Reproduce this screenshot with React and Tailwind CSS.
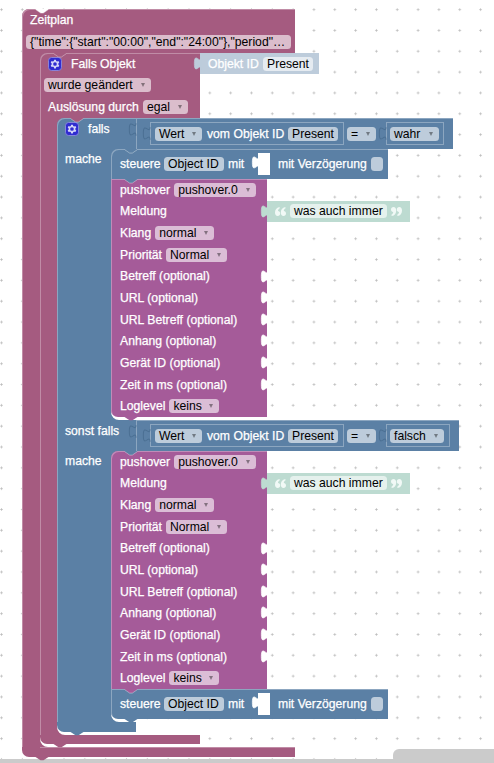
import React from "react";
import clsx from "clsx";

const optionalInputs = [
  "Betreff (optional)",
  "URL (optional)",
  "URL Betreff (optional)",
  "Anhang (optional)",
  "Gerät ID (optional)",
  "Zeit in ms (optional)",
];

// Notch on the upper edge of a block, filled with the colour of the block above
const Notch = ({ className }) => (
  <svg
    className={clsx("absolute top-0 left-[13px] z-10", className)}
    width="14"
    height="5"
    viewBox="0 0 14 5"
  >
    <path d="M.7 0v.5l5 3.4h2.6l5-3.4V0z" fill="currentColor" />
    <path d="M.7 .7l5 3.4h2.6l5-3.4" fill="none" stroke="#fff" strokeOpacity=".35" />
  </svg>
);

// Connector under the lower edge of a block
const Foot = ({ className }) => (
  <svg
    className={clsx("absolute top-full left-[13px] z-10", className)}
    width="14"
    height="4"
    viewBox="0 0 14 4"
  >
    <path d="M.5 0l5 3.3h3l5-3.3z" fill="currentColor" />
  </svg>
);

// Puzzle tab of a value block
const Tab = ({ className, outline }) => (
  <svg
    className={clsx("absolute overflow-visible", className)}
    width="7"
    height="17"
    viewBox="0 0 8.4 20.4"
  >
    <path
      d="M8.4 5c0 10-8-8-8 7.5s8-2.5 8 7.5z"
      fill="currentColor"
      stroke={outline ? "none" : "currentColor"}
      strokeWidth=".8"
    />
    {outline && (
      <path
        d="M8.4 5c0 10-8-8-8 7.5s8-2.5 8 7.5"
        fill="none"
        stroke="#4b6f93"
        strokeWidth="1.2"
      />
    )}
  </svg>
);

const Gear = () => (
  <svg className="shrink-0" width="14" height="14" viewBox="0 0 16 16">
    <rect x=".6" y=".6" width="14.8" height="14.8" rx="3.5" fill="#2f2bd0" stroke="#8f8de0" />
    <path
      d="M7 3h2l.4 1.5 1 .5 1.5-.5 1 1.7-1.1 1.1v1.4l1.1 1.1-1 1.7-1.5-.5-1 .5L9 13H7l-.4-1.5-1-.5-1.5.5-1-1.7 1.1-1.1V7.3L3.1 6.2l1-1.7 1.5.5 1-.5z"
      fill="#d4d5f8"
    />
    <circle cx="8" cy="8" r="2.1" fill="#2f2bd0" />
  </svg>
);

const Quote = ({ className }) => (
  <svg className={clsx("shrink-0", className)} width="11" height="9" viewBox="0 0 11 9" fill="#f1f9f6">
    <path d="M4.5 0C1.5.6 0 2.7 0 5.6 0 7.7 1 9 2.7 9 4.2 9 5.2 8 5.2 6.5 5.2 5.1 4.3 4.1 3 4c0-1.2.6-2.2 1.8-2.8z" />
    <path d="M10.3 0C7.3.6 5.8 2.7 5.8 5.6 5.8 7.7 6.8 9 8.5 9 10 9 11 8 11 6.5 11 5.1 10.1 4.1 8.8 4c0-1.2.6-2.2 1.8-2.8z" />
  </svg>
);

const Field = ({ children, className, dropdown }) => (
  <span
    className={clsx(
      "flex h-[14px] shrink-0 items-center rounded-[3.5px] bg-white/60 pl-[4px] text-black",
      className
    )}
  >
    {children}
    {dropdown && (
      <span className="ml-auto mr-[6px] h-0 w-0 border-x-[2.5px] border-t-4 border-x-transparent border-t-black/40" />
    )}
  </span>
);

const Label = ({ children, className }) => (
  <span className={clsx("shrink-0 [-webkit-text-stroke:0.25px]", className)}>{children}</span>
);

// Area of a C-shaped block that holds the nested blocks
const Statement = ({ children, label, className, arm, armText }) => (
  <div className="flex">
    <div className={clsx("shrink-0", arm, className)}>{label}</div>
    <div className={clsx("relative flex flex-col items-start pb-[3px]", armText)}>
      <span className="absolute top-0 left-0 h-[8px] w-[8px] bg-current" />
      <svg className="absolute bottom-0 left-0" width="8" height="8" viewBox="0 0 8 8">
        <path d="M0 0a8 8 0 0 0 8 8H0z" fill="currentColor" />
      </svg>
      {children}
    </div>
  </div>
);

const Comparison = ({ value, className, valueClass, fieldClass }) => (
  <div
    className={clsx(
      "relative flex h-[31px] items-center bg-[#5b80a5] pl-[14px] shadow-[inset_1px_1px_0_#8ca6c0]",
      className
    )}
  >
    <Tab className="-left-[7px] top-px text-[#5b80a5]" outline />
    <div className="relative flex h-[23px] w-[194px] shrink-0 items-center border border-[#8ca6c0] pl-[4px]">
      <Tab className="-left-[8px] top-0 text-[#5b80a5]" outline />
      <Field dropdown className="w-[47px]">Wert</Field>
      <Label className="ml-[5px] w-[81px]">vom Objekt ID</Label>
      <Field className="w-[50px]">Present</Field>
    </div>
    <Field dropdown className="ml-[3px] w-[29px]">=</Field>
    <div
      className={clsx(
        "relative ml-[10px] flex h-[23px] shrink-0 items-center border border-[#8ca6c0] pl-[3px]",
        valueClass
      )}
    >
      <Tab className="-left-[8px] top-0 text-[#5b80a5]" outline />
      <Field dropdown className={fieldClass}>{value}</Field>
    </div>
  </div>
);

const Control = ({ first, last }) => (
  <div
    className={clsx(
      "relative flex h-[30px] w-[277px] items-center bg-[#5b80a5] pl-[9px] shadow-[inset_1px_1px_0_#8ca6c0]",
      first && "rounded-tl-[7px]",
      last && "rounded-bl-[7px]"
    )}
  >
    <Notch className={first ? "text-[#5b80a5]" : "text-[#a55b99]"} />
    <Label className="w-[44px]">steuere</Label>
    <Field className="w-[60px]">Object ID</Field>
    <Label className="ml-[4px] w-[30px]">mit</Label>
    <div className="relative h-[22px] w-[12px] shrink-0 bg-white">
      <Tab className="-left-[6px] -top-px text-white" />
    </div>
    <Label className="ml-[8px] w-[93px]">mit Verzögerung</Label>
    <Field className="w-[12px]" />
    {last && <Foot className="text-[#5b80a5]" />}
  </div>
);

const Row = ({ label, children, socket }) => (
  <div className="relative flex flex-1 items-center pl-[9px]">
    <Label className="mr-[4px]">{label}</Label>
    {children}
    {socket && <Tab className="-right-px top-0 text-white" />}
  </div>
);

const Pushover = ({ first, last }) => (
  <div
    className={clsx(
      "relative flex h-[238px] w-[156px] flex-col bg-[#a55b99] shadow-[inset_1px_1px_0_#c08cb8]",
      first && "rounded-tl-[7px]",
      last && "rounded-bl-[7px]"
    )}
  >
    <Notch className="text-[#5b80a5]" />
    <Row label="pushover">
      <Field dropdown className="w-[82px]">pushover.0</Field>
    </Row>
    <Row label="Meldung">
      <div className="absolute left-full top-0 flex h-[21px] w-[143px] items-center bg-[#bddbd1] pl-[8px]">
        <Tab className="-left-[6px] top-0 text-[#bddbd1]" />
        <Quote />
        <Field className="ml-[4px] w-[97px]">was auch immer</Field>
        <Quote className="ml-[4px] rotate-180" />
      </div>
    </Row>
    <Row label="Klang">
      <Field dropdown className="w-[59px]">normal</Field>
    </Row>
    <Row label="Priorität">
      <Field dropdown className="w-[61px]">Normal</Field>
    </Row>
    {optionalInputs.map((label) => (
      <Row key={label} label={label} socket />
    ))}
    <Row label="Loglevel">
      <Field dropdown className="w-[50px]">keins</Field>
    </Row>
    {last && <Foot className="text-[#a55b99]" />}
  </div>
);

const IfBlock = () => (
  <div className="relative">
    {/* falls */}
    <div className="relative flex h-[31px] w-[396px] rounded-tl-[7px] bg-[#5b80a5] shadow-[inset_1px_1px_0_#8ca6c0]">
      <Notch className="text-[#a55b80]" />
      <div className="flex h-[21px] w-[79px] shrink-0 items-center pl-[8px]">
        <Gear />
        <Label className="ml-[9px]">falls</Label>
      </div>
      <Comparison
        value="wahr"
        className="w-[317px]"
        valueClass="w-[58px]"
        fieldClass="w-[49px]"
      />
    </div>
    <Statement
      arm="w-[54px]"
      className="bg-[#5b80a5] shadow-[inset_1px_0_0_#8ca6c0]"
      armText="text-[#5b80a5]"
      label={<Label className="block pl-[8px] pt-[3px] text-white">mache</Label>}
    >
      <div className="text-white">
        <Control first />
        <Pushover last />
      </div>
    </Statement>

    {/* sonst falls */}
    <div className="flex h-[31px] w-[402px] bg-[#5b80a5] shadow-[inset_1px_0_0_#8ca6c0]">
      <div className="flex h-[21px] w-[79px] shrink-0 items-center pl-[8px]">
        <Label>sonst falls</Label>
      </div>
      <Comparison
        value="falsch"
        className="w-[323px]"
        valueClass="w-[64px]"
        fieldClass="w-[54px]"
      />
    </div>
    <Statement
      arm="w-[54px]"
      className="bg-[#5b80a5] shadow-[inset_1px_0_0_#8ca6c0]"
      armText="text-[#5b80a5]"
      label={<Label className="block pl-[8px] pt-[3px] text-white">mache</Label>}
    >
      <div className="text-white">
        <Pushover first />
        <Control last />
      </div>
    </Statement>

    <div className="relative h-[10px] w-[79px] rounded-bl-[7px] bg-[#5b80a5]">
      <Foot className="text-[#5b80a5]" />
    </div>
  </div>
);

const OnBlock = () => (
  <div className="relative text-white">
    <div className="relative h-[65px] w-[160px] rounded-tl-[7px] bg-[#a55b80] shadow-[inset_1px_1px_0_#c08ca6]">
      <Notch className="text-[#a55b80]" />
      <div className="flex h-[21px] items-center pl-[8px]">
        <Gear />
        <Label className="ml-[9px]">Falls Objekt</Label>
        <div className="absolute top-0 left-full flex h-[21px] w-[119px] items-center bg-[#bdccdb] pl-[8px]">
          <Tab className="-left-[6px] top-0 text-[#bdccdb]" />
          <Label className="w-[55px]">Objekt ID</Label>
          <Field className="w-[50px]">Present</Field>
        </div>
      </div>
      <div className="flex h-[22px] items-center pl-[4px]">
        <Field dropdown className="w-[107px]">wurde geändert</Field>
      </div>
      <div className="flex h-[22px] items-center pl-[8px]">
        <Label className="w-[95px]">Auslösung durch</Label>
        <Field dropdown className="w-[45px]">egal</Field>
      </div>
    </div>
    <Statement
      arm="w-[17px]"
      className="bg-[#a55b80] shadow-[inset_1px_0_0_#c08ca6]"
      armText="text-[#a55b80]"
    >
      <div className="text-white">
        <IfBlock />
      </div>
    </Statement>
    <div className="relative h-[9px] w-[160px] rounded-bl-[7px] bg-[#a55b80]">
      <Foot className="text-[#a55b80]" />
    </div>
  </div>
);

const ScheduleBlock = () => (
  <div className="text-white">
    <div className="relative h-[44px] w-[273px] rounded-tl-[7px] bg-[#a55b80] shadow-[inset_1px_1px_0_#c08ca6]">
      <Notch className="text-white" />
      <div className="flex h-[22px] items-center pl-[8px]">
        <Label>Zeitplan</Label>
      </div>
      <div className="flex h-[22px] items-center pl-[4px]">
        <Field className="w-[265px]">
          {'{"time":{"start":"00:00","end":"24:00"},"period"…'}
        </Field>
      </div>
    </div>
    <Statement
      arm="w-[18px]"
      className="bg-[#a55b80] shadow-[inset_1px_0_0_#c08ca6]"
      armText="text-[#a55b80]"
    >
      <OnBlock />
    </Statement>
    <div className="relative h-[10px] w-[273px] rounded-bl-[7px] bg-[#a55b80]">
      <span className="absolute top-0 right-0 left-[18px] h-px bg-[#c08ca6]" />
      <Foot className="text-[#a55b80]" />
    </div>
  </div>
);

const App = () => {
  return (
    <div className="relative h-[763px] w-[494px] overflow-hidden whitespace-nowrap bg-white bg-[radial-gradient(circle_at_center,#bcbcbc_0.8px,transparent_1.4px)] bg-[length:20.83px_20.83px] bg-[position:-8.9px_-0.8px] pl-[22px] pt-[9px] font-['Liberation_Sans',Arial,sans-serif] text-[12.2px] leading-[14px]">
      <ScheduleBlock />

      {/* Scrollbars */}
      <div className="absolute inset-x-0 bottom-0 h-[4px] bg-[#cbcbcb]" />
      <div className="absolute bottom-0 left-[393px] h-[14px] w-[110px] rounded-tl-[6px] rounded-bl-[5px] bg-[#cbcbcb]" />
    </div>
  );
};

export default App;
